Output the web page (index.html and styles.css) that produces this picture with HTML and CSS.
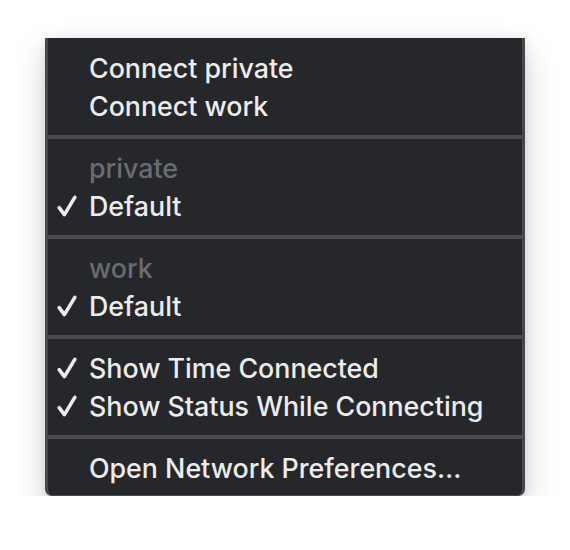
FILE: index.html
```html
<!DOCTYPE html>
<html>
<head>
<meta charset="utf-8">
<link rel="stylesheet" href="styles.css">
</head>
<body>
<div class="menu">
  <div class="section first">
    <div class="item"><span class="mark"></span><span class="label">Connect private</span></div>
    <div class="item"><span class="mark"></span><span class="label">Connect work</span></div>
  </div>
  <div class="sep"></div>
  <div class="section">
    <div class="item header"><span class="mark"></span><span class="label">private</span></div>
    <div class="item"><span class="mark"><svg viewBox="0 0 20 22" width="20" height="22"><path d="M2.2 12.6 L7.4 19.6 L17.8 2.4" fill="none" stroke="#ececec" stroke-width="3.6" stroke-linecap="round" stroke-linejoin="round"/></svg></span><span class="label">Default</span></div>
  </div>
  <div class="sep"></div>
  <div class="section">
    <div class="item header"><span class="mark"></span><span class="label">work</span></div>
    <div class="item"><span class="mark"><svg viewBox="0 0 20 22" width="20" height="22"><path d="M2.2 12.6 L7.4 19.6 L17.8 2.4" fill="none" stroke="#ececec" stroke-width="3.6" stroke-linecap="round" stroke-linejoin="round"/></svg></span><span class="label">Default</span></div>
  </div>
  <div class="sep"></div>
  <div class="section">
    <div class="item"><span class="mark"><svg viewBox="0 0 20 22" width="20" height="22"><path d="M2.2 12.6 L7.4 19.6 L17.8 2.4" fill="none" stroke="#ececec" stroke-width="3.6" stroke-linecap="round" stroke-linejoin="round"/></svg></span><span class="label">Show Time Connected</span></div>
    <div class="item"><span class="mark"><svg viewBox="0 0 20 22" width="20" height="22"><path d="M2.2 12.6 L7.4 19.6 L17.8 2.4" fill="none" stroke="#ececec" stroke-width="3.6" stroke-linecap="round" stroke-linejoin="round"/></svg></span><span class="label">Show Status While Connecting</span></div>
  </div>
  <div class="sep"></div>
  <div class="section last">
    <div class="item"><span class="mark"></span><span class="label">Open Network Preferences…</span></div>
  </div>
</div>
</body>
</html>
```

FILE: styles.css
```css
html, body {
  margin: 0;
  padding: 0;
  background: #ffffff;
}
body {
  padding: 38px 0 0 45px;
  font-family: Inter, "Noto Sans", sans-serif;
}
.menu {
  width: 474px;
  background: #26272b;
  border: 3px solid #47484b;
  border-top: none;
  border-bottom-width: 1px;
  border-radius: 0 0 7px 7px;
  box-shadow: 0 14px 34px rgba(0, 0, 0, 0.18), 0 2px 10px rgba(0, 0, 0, 0.1);
}
.section {
  padding: 10px 0;
}
.section.first {
  padding-top: 11px;
}
.section.last {
  padding-bottom: 8px;
}
.item {
  display: flex;
  align-items: center;
  height: 38px;
  font-size: 26.8px;
  font-weight: 500;
  color: #ececed;
}
.mark {
  width: 20px;
  height: 22px;
  margin-left: 9px;
  margin-right: 12px;
  display: flex;
}
.header {
  color: #6b6c70;
}
.sep {
  height: 4px;
  background: #4a4b4e;
}
```
